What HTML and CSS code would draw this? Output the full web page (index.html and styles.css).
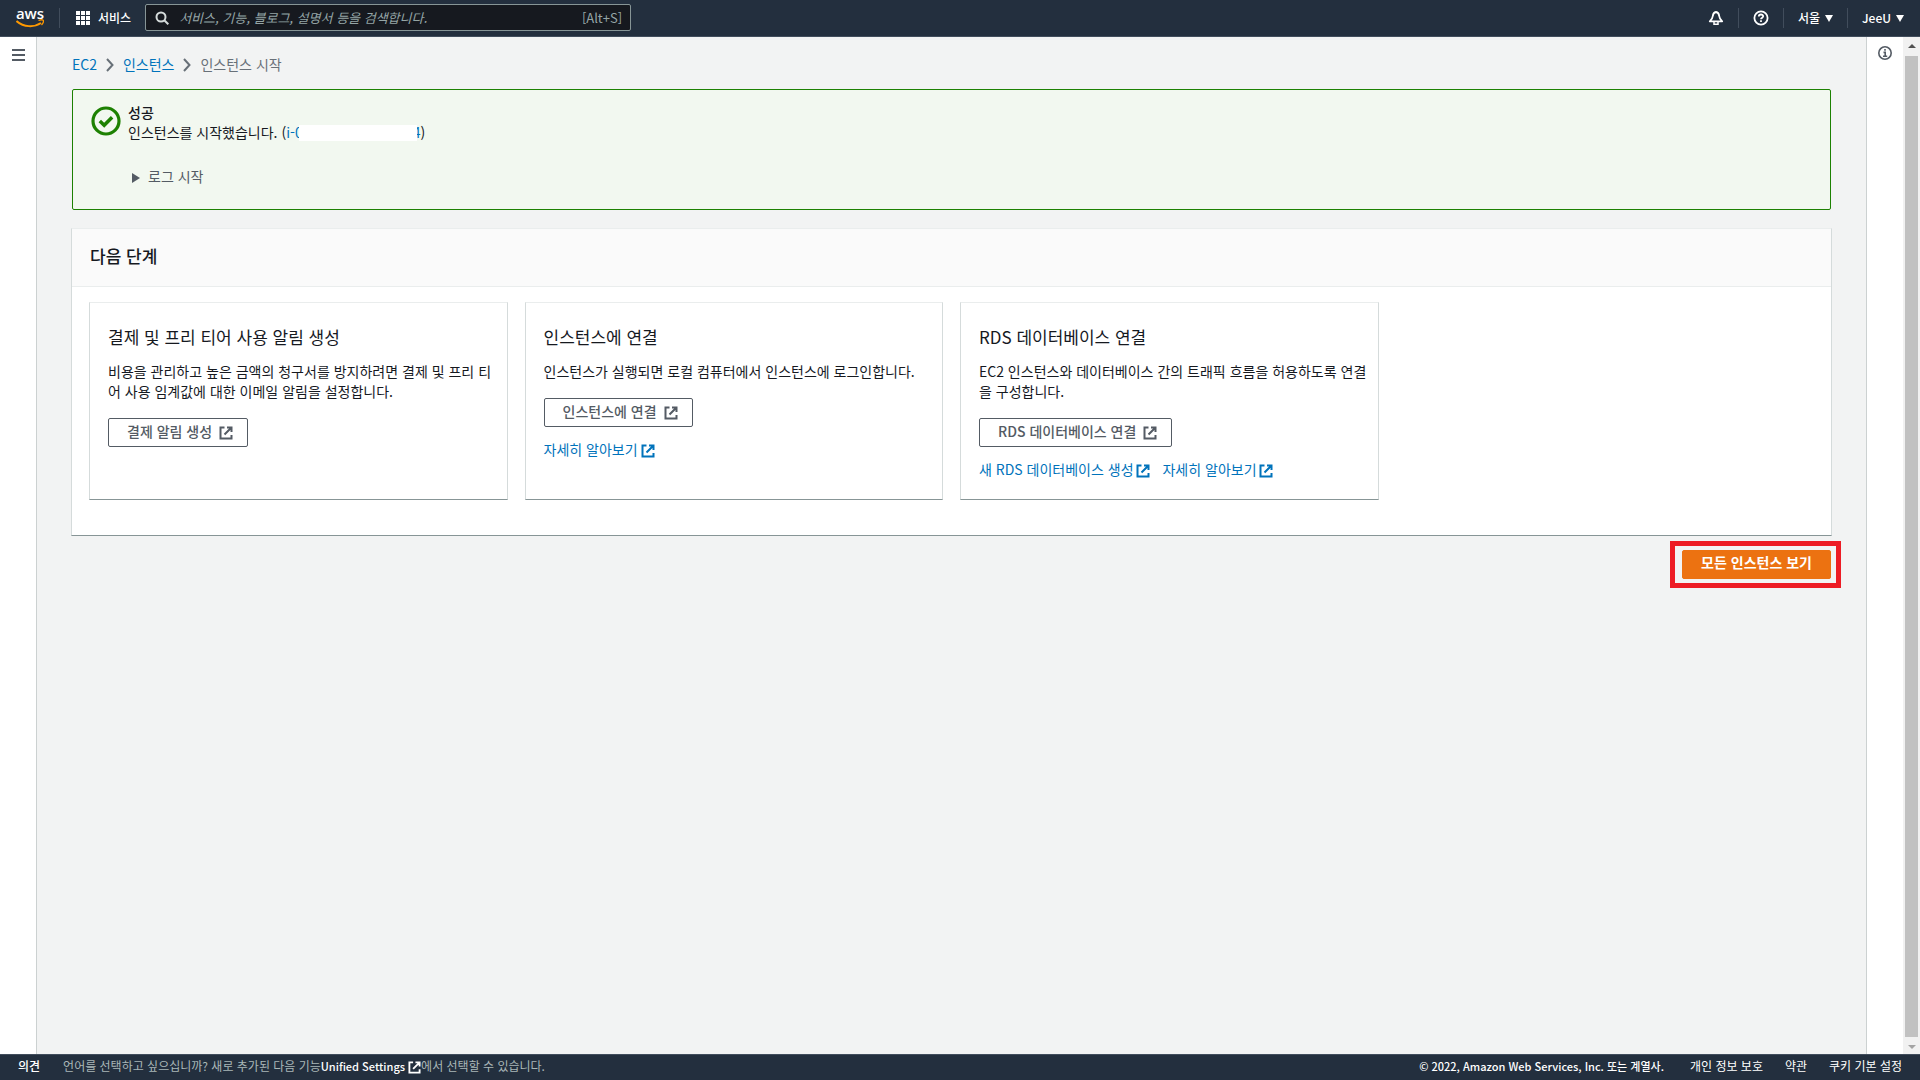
FILE: index.html
```html
<!DOCTYPE html>
<html lang="ko">
<head>
<meta charset="utf-8">
<meta name="viewport" content="width=device-width, initial-scale=1">
<title>인스턴스 시작 | EC2</title>
<link rel="stylesheet" href="styles.css">
</head>
<body>
<svg class="sprite" aria-hidden="true">
  <symbol id="external" viewBox="0 0 14 14">
    <path d="M5.500 1.500H1.500v11h11V9M8 1.500h4.500V6M12 2L5.500 8.500" fill="none" stroke="currentColor" stroke-width="2"/>
  </symbol>
  <symbol id="caret" viewBox="0 0 8 7"><path d="M0 0h8L4 7z" fill="currentColor"/></symbol>
  <symbol id="chevron" viewBox="0 0 8 14"><path d="M1 1l5.500 6L1 13" fill="none" stroke="currentColor" stroke-width="2"/></symbol>
</svg>

<header class="topbar">
  <a class="logo" href="#" aria-label="aws">
    <span class="logo-word">aws</span>
    <svg class="logo-smile" viewBox="0 0 28 9" aria-hidden="true">
      <path d="M.500 2C8 8.500 18 8.500 25 4" fill="none" stroke="#f90" stroke-width="2"/>
      <path d="M22.500 1.500c2-.8 4-.8 4.700-.3.500.8-.2 3.200-1.700 4.800" fill="none" stroke="#f90" stroke-width="1.300"/>
    </svg>
  </a>
  <button class="top-item services" type="button">
    <svg class="icon-grid" viewBox="0 0 14 14" fill="currentColor" aria-hidden="true">
      <path d="M0 0h4v4H0zM5 0h4v4H5zM10 0h4v4h-4zM0 5h4v4H0zM5 5h4v4H5zM10 5h4v4h-4zM0 10h4v4H0zM5 10h4v4H5zM10 10h4v4h-4z"/>
    </svg>
    서비스
  </button>
  <form class="search" role="search">
    <svg class="icon-search" viewBox="0 0 14 14" fill="none" stroke="currentColor" stroke-width="2" aria-hidden="true"><circle cx="6" cy="6" r="4.500"/><path d="M9.300 9.300L13.300 13.300"/></svg>
    <input class="search-input" type="text" aria-label="검색" placeholder="서비스, 기능, 블로그, 설명서 등을 검색합니다.">
    <kbd class="shortcut">[Alt+S]</kbd>
  </form>
  <nav class="top-nav" aria-label="계정">
    <button class="top-item" type="button" aria-label="알림">
      <svg class="icon-top" viewBox="0 0 16 16" fill="none" stroke="currentColor" stroke-width="1.800" aria-hidden="true"><path d="M8 2C6 2.300 5 3.800 4.800 6 4.600 8.500 3.500 9.800 1.800 11.300h12.400C12.500 9.800 11.400 8.500 11.200 6 11 3.800 10 2.300 8 2z" stroke-linejoin="round"/><path d="M6 12v2.200h4V12" stroke-width="1.500"/></svg>
    </button>
    <button class="top-item" type="button" aria-label="도움말">
      <svg class="icon-top" viewBox="0 0 16 16" fill="none" stroke="currentColor" stroke-width="1.800" aria-hidden="true"><circle cx="8" cy="8" r="6.600"/><path d="M5.800 6.500C5.800 3.800 10.200 3.900 10.200 6.300 10.200 7.700 8 7.700 8 9.300M8 10.300V12"/></svg>
    </button>
    <button class="top-item" type="button">서울 <svg class="icon-caret" aria-hidden="true"><use href="#caret"/></svg></button>
    <button class="top-item" type="button">JeeU <svg class="icon-caret" aria-hidden="true"><use href="#caret"/></svg></button>
  </nav>
</header>

<div class="shell">
  <aside class="rail rail-left">
    <button class="rail-button" type="button" aria-label="메뉴 열기">
      <svg class="icon-menu" viewBox="0 0 13 12" fill="currentColor" aria-hidden="true"><path d="M0 0h13v2H0zM0 5h13v2H0zM0 10h13v2H0z"/></svg>
    </button>
  </aside>

  <main class="content">
    <nav class="breadcrumb" aria-label="이동 경로">
      <a href="#">EC2</a>
      <svg class="icon-chevron" aria-hidden="true"><use href="#chevron"/></svg>
      <a href="#">인스턴스</a>
      <svg class="icon-chevron" aria-hidden="true"><use href="#chevron"/></svg>
      <span>인스턴스 시작</span>
    </nav>

    <section class="alert">
      <svg class="icon-success" viewBox="0 0 30 30" fill="none" stroke="currentColor" aria-hidden="true"><circle cx="15" cy="15" r="13" stroke-width="3.200"/><path d="M8.800 15l4.400 4.200 7.900-8" stroke-width="3.500"/></svg>
      <div class="alert-body">
        <strong class="alert-title">성공</strong>
        <p class="alert-text">인스턴스를 시작했습니다. (<a href="#">i-0<span class="redacted"></span>4</a>)</p>
        <details class="log">
          <summary>로그 시작</summary>
        </details>
      </div>
    </section>

    <section class="panel">
      <h2 class="panel-title">다음 단계</h2>
      <div class="cards">
        <article class="card">
          <h3>결제 및 프리 티어 사용 알림 생성</h3>
          <p>비용을 관리하고 높은 금액의 청구서를 방지하려면 결제 및 프리 티어 사용 임계값에 대한 이메일 알림을 설정합니다.</p>
          <button class="button" type="button">결제 알림 생성 <svg class="icon-ext" aria-hidden="true"><use href="#external"/></svg></button>
        </article>
        <article class="card">
          <h3>인스턴스에 연결</h3>
          <p>인스턴스가 실행되면 로컬 컴퓨터에서 인스턴스에 로그인합니다.</p>
          <button class="button" type="button">인스턴스에 연결 <svg class="icon-ext" aria-hidden="true"><use href="#external"/></svg></button>
          <div class="links">
            <a href="#">자세히 알아보기 <svg class="icon-ext" aria-hidden="true"><use href="#external"/></svg></a>
          </div>
        </article>
        <article class="card">
          <h3>RDS 데이터베이스 연결</h3>
          <p>EC2 인스턴스와 데이터베이스 간의 트래픽 흐름을 허용하도록 연결을 구성합니다.</p>
          <button class="button" type="button">RDS 데이터베이스 연결 <svg class="icon-ext" aria-hidden="true"><use href="#external"/></svg></button>
          <div class="links">
            <a href="#">새 RDS 데이터베이스 생성 <svg class="icon-ext" aria-hidden="true"><use href="#external"/></svg></a>
            <a href="#">자세히 알아보기 <svg class="icon-ext" aria-hidden="true"><use href="#external"/></svg></a>
          </div>
        </article>
      </div>
    </section>

    <div class="actions">
      <div class="highlight"><button class="button button-primary" type="button">모든 인스턴스 보기</button></div>
    </div>
  </main>

  <aside class="rail rail-right">
    <button class="rail-button" type="button" aria-label="정보">
      <svg class="icon-info" viewBox="0 0 14 14" fill="none" stroke="currentColor" aria-hidden="true"><circle cx="7" cy="7" r="6.200" stroke-width="1.600"/><path d="M7 3v1.700M5.500 6.400H7.200V10M5 10.200h4.200" stroke-width="1.600"/></svg>
    </button>
  </aside>
  <div class="scrollbar" aria-hidden="true">
    <svg class="scroll-arrow scroll-up" viewBox="0 0 8 4"><path d="M4 0l4 4H0z" fill="currentColor"/></svg>
    <div class="scroll-thumb"></div>
    <svg class="scroll-arrow scroll-down" viewBox="0 0 8 4"><path d="M0 0h8L4 4z" fill="currentColor"/></svg>
  </div>
</div>

<footer class="footer">
  <a class="feedback" href="#">의견</a>
  <p class="language">언어를 선택하고 싶으십니까? 새로 추가된 다음 기능<a href="#">Unified Settings <svg class="icon-ext" aria-hidden="true"><use href="#external"/></svg></a>에서 선택할 수 있습니다.</p>
  <div class="legal">
    <span class="copyright">© 2022, Amazon Web Services, Inc. 또는 계열사.</span>
    <a href="#">개인 정보 보호</a>
    <a href="#">약관</a>
    <a href="#">쿠키 기본 설정</a>
  </div>
</footer>
</body>
</html>
```
FILE: styles.css
```css
* {
  box-sizing: border-box;
}

body {
  margin: 0;
  min-height: 100vh;
  display: flex;
  flex-direction: column;
  background: #f2f3f3;
  color: #16191f;
  font-family: "Noto Sans CJK KR", "Noto Sans", sans-serif;
  font-size: 14px;
  line-height: 20px;
}

h2, h3, p {
  margin: 0;
  font-weight: 400;
}

a {
  color: #0073bb;
  text-decoration: none;
}

button, input, kbd {
  font: inherit;
}

svg {
  flex: none;
}

.sprite {
  display: none;
}

/* Top bar */
.topbar {
  display: flex;
  align-items: center;
  height: 37px;
  padding: 0 0 1px 16px;
  background: #232f3e;
  border-bottom: 1px solid #414d5c;
  color: #fff;
  font-size: 12px;
}

.logo {
  display: flex;
  flex-direction: column;
  align-items: center;
  width: 28px;
  margin-right: 15px;
  color: #fff;
}

.logo-word {
  font-family: "Open Sans", "Noto Sans", sans-serif;
  font-size: 15px;
  font-weight: 600;
  line-height: 11px;
}

.logo-smile {
  width: 28px;
  height: 9px;
}

.top-item {
  display: flex;
  align-items: center;
  gap: 5px;
  height: 20px;
  padding: 0 16px;
  border: 0;
  border-left: 1px solid #414d5c;
  background: none;
  color: #fff;
  font-weight: 500;
}

.services {
  gap: 8px;
  padding-right: 14px;
}

.icon-grid {
  width: 14px;
  height: 14px;
}

.search {
  display: flex;
  align-items: center;
  width: 486px;
  height: 27px;
  padding: 0 8px 0 9px;
  gap: 10px;
  border: 1px solid #879596;
  border-radius: 2px;
  background: #16191f;
  color: #d5dbdb;
  font-size: 13px;
}

.icon-search {
  width: 14px;
  height: 14px;
}

.search-input {
  flex: 1;
  min-width: 0;
  padding: 0;
  border: 0;
  background: none;
  color: #fff;
}

.search-input::placeholder {
  color: #95a5a6;
  font-style: italic;
  opacity: 1;
}

.shortcut {
  color: #95a5a6;
}

.top-nav {
  display: flex;
  margin-left: auto;
}

.top-nav .top-item {
  padding: 0 14px;
}

.top-nav .top-item:first-child {
  border-left: 0;
}

.top-nav .top-item:last-child {
  padding-right: 16px;
}

.icon-top {
  width: 16px;
  height: 16px;
}

.icon-caret {
  width: 8px;
  height: 7px;
  margin-top: 1px;
}

/* Page frame */
.shell {
  flex: 1;
  display: flex;
}

.rail {
  flex: none;
  width: 37px;
  background: #fff;
}

.rail-left {
  border-right: 1px solid #ccd1d1;
}

.rail-right {
  border-left: 1px solid #ccd1d1;
}

.rail-button {
  display: flex;
  justify-content: center;
  width: 100%;
  padding: 9px 0;
  border: 0;
  background: none;
  color: #545b64;
}

.icon-menu {
  width: 13px;
  height: 12px;
  margin-top: 3px;
}

.icon-info {
  width: 14px;
  height: 14px;
}

.scrollbar {
  flex: none;
  display: flex;
  flex-direction: column;
  align-items: center;
  width: 17px;
  padding: 7px 0 5px;
  gap: 8px;
  background: #f1f1f1;
}

.scroll-arrow {
  width: 8px;
  height: 4px;
}

.scroll-up {
  color: #505050;
}

.scroll-down {
  color: #a3a3a3;
}

.scroll-thumb {
  flex: 1;
  width: 13px;
  background: #c1c1c1;
}

.content {
  flex: 1;
  min-width: 0;
  padding: 17px 35px;
}

.breadcrumb {
  display: flex;
  align-items: center;
  gap: 9px;
  margin-bottom: 15px;
  color: #687078;
}

.icon-chevron {
  width: 8px;
  height: 14px;
  margin-top: 2px;
}

/* Success message */
.alert {
  display: flex;
  gap: 7px;
  padding: 12px 18px 23px;
  margin-bottom: 18px;
  border: 1px solid #1d8102;
  border-radius: 2px;
  background: #f2f8f0;
}

.icon-success {
  width: 30px;
  height: 30px;
  margin-top: 4px;
  color: #1d8102;
}

.alert-title {
  display: block;
  font-weight: 500;
}

.redacted {
  display: inline-block;
  position: relative;
  width: 118px;
  height: 16px;
  margin: 0 -4px;
  vertical-align: -3px;
  background: #fff;
}

.log {
  margin: 24px 0 0 4px;
  color: #545b64;
}

.log summary {
  display: flex;
  align-items: center;
  gap: 8px;
}

.log summary::before {
  content: "";
  margin-top: 4px;
  border-left: 8px solid #545b64;
  border-top: 5px solid transparent;
  border-bottom: 5px solid transparent;
}

/* Next steps */
.panel {
  margin: 0 -1px;
  border: 1px solid #d5dbdb;
  border-top-color: #eaeded;
  border-bottom-color: #879596;
  background: #fff;
}

.panel-title {
  padding: 15px 18px 18px;
  border-bottom: 1px solid #eaeded;
  background: #fafafa;
  font-size: 17px;
  font-weight: 500;
  line-height: 24px;
}

.cards {
  display: grid;
  grid-template-columns: repeat(4, 1fr);
  gap: 17px;
  padding: 15px 17px 35px;
}

.card {
  padding: 22px 10px 20px 18px;
  border: 1px solid #d5dbdb;
  border-top-color: #eaeded;
  border-bottom-color: #879596;
}

.card h3 {
  margin-bottom: 12px;
  font-size: 17px;
  line-height: 24px;
}

.card p {
  margin-bottom: 17px;
}

.button {
  display: inline-flex;
  align-items: center;
  gap: 7px;
  height: 29px;
  padding: 0 14px 3px 18px;
  border: 1px solid #545b64;
  border-radius: 2px;
  background: #fff;
  color: #545b64;
  font-weight: 500;
}

.button .icon-ext {
  margin-top: 3px;
}

.icon-ext {
  width: 14px;
  height: 14px;
  vertical-align: -3px;
}

.links {
  display: flex;
  gap: 12px;
  margin-top: 12px;
}

.links .icon-ext {
  margin-left: -1px;
}

.actions {
  display: flex;
  justify-content: flex-end;
  padding-top: 14px;
}

.highlight {
  position: relative;
  display: flex;
}

.highlight::after {
  content: "";
  position: absolute;
  inset: -9px -10px -9px -12px;
  border: 5px solid #ed1c24;
  pointer-events: none;
}

.button-primary {
  padding: 0 18px 5px;
  border-color: #ec7211;
  background: #ec7211;
  color: #fff;
  font-weight: 700;
}

/* Footer */
.footer {
  display: flex;
  align-items: center;
  height: 26px;
  padding: 0 18px 3px;
  border-top: 1px solid #414d5c;
  background: #232f3e;
  color: #fff;
  font-size: 12px;
}

.footer a {
  color: #fff;
}

.feedback {
  margin-right: 23px;
  font-weight: 500;
}

.language {
  color: #aab7b8;
}

.language a {
  font-size: 11px;
  font-weight: 500;
}

.language .icon-ext {
  width: 13px;
  height: 13px;
}

.legal {
  display: flex;
  gap: 22px;
  margin-left: auto;
}

.copyright {
  margin-right: 4px;
  font-size: 11px;
  font-weight: 500;
}
```
